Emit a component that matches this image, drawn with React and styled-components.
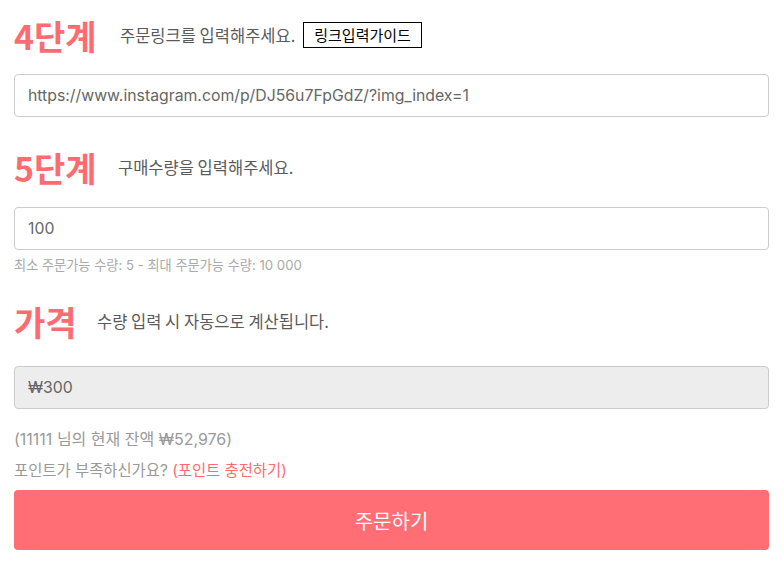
import React from 'react'
import styled, { createGlobalStyle } from 'styled-components'

const Global = createGlobalStyle`
  body {
    margin: 0;
    padding: 0;
    background: #fff;
    font-family: 'Inter', 'Noto Sans CJK KR', sans-serif;
  }
  * { box-sizing: border-box; }
`

const Page = styled.div`
  width: 755px;
  margin-left: 14px;
  padding-top: 13px;
  display: flex;
  flex-direction: column;
`

const StepHead = styled.div`
  display: flex;
  align-items: center;
  height: 44px;
  margin-top: ${p => p.top || 0}px;
`

const StepTitle = styled.h2`
  margin: 0;
  font-size: 34px;
  font-weight: 700;
  color: #ff6b70;
  font-family: 'Noto Sans CJK KR', sans-serif;
  width: ${p => p.w}px;
`

const StepDesc = styled.span`
  font-size: 16.5px;
  color: #5a5a5a;
  font-family: 'Noto Sans CJK KR', sans-serif;
`

const GuideButton = styled.button`
  margin-left: 8px;
  border: 1px solid #000;
  background: #fff;
  color: #000;
  font-size: 15px;
  font-family: 'Noto Sans CJK KR', sans-serif;
  padding: 0 10px;
  height: 26px;
  line-height: 22px;
`

const Field = styled.input`
  width: 100%;
  height: 43px;
  margin-top: ${p => p.top || 0}px;
  border: 1px solid #ccc;
  border-radius: 4px;
  padding: 0 13px;
  font-size: 15.8px;
  font-family: 'Inter', 'Noto Sans CJK KR', sans-serif;
  color: #666;
  background: ${p => (p.readOnly ? '#ededed' : '#fff')};
  outline: none;
`

const Hint = styled.div`
  font-size: 13.2px;
  color: #aaa;
  margin-top: 5px;
  font-family: 'Inter', 'Noto Sans CJK KR', sans-serif;
`

const Info = styled.div`
  font-size: ${p => p.size || 15}px;
  color: #999;
  margin-top: ${p => p.top || 0}px;
  font-family: 'Inter', 'Noto Sans CJK KR', sans-serif;
`

const ChargeLink = styled.a`
  color: #ff6b70;
  text-decoration: none;
`

const OrderButton = styled.button`
  width: 100%;
  height: 60px;
  margin-top: 10px;
  border: none;
  border-radius: 4px;
  background: #ff6e74;
  color: #fff;
  font-size: 20px;
  font-family: 'Noto Sans CJK KR', sans-serif;
`

export default function App() {
  return (
    <Page>
      <Global />
      <StepHead>
        <StepTitle w={106}>4단계</StepTitle>
        <StepDesc>주문링크를 입력해주세요.</StepDesc>
        <GuideButton>링크입력가이드</GuideButton>
      </StepHead>
      <Field top={17} defaultValue="https://www.instagram.com/p/DJ56u7FpGdZ/?img_index=1" />
      <StepHead top={28}>
        <StepTitle w={104}>5단계</StepTitle>
        <StepDesc>구매수량을 입력해주세요.</StepDesc>
      </StepHead>
      <Field top={18} defaultValue="100" />
      <Hint>최소 주문가능 수량: 5 - 최대 주문가능 수량: 10 000</Hint>
      <StepHead top={25}>
        <StepTitle w={83}>가격</StepTitle>
        <StepDesc>수량 입력 시 자동으로 계산됩니다.</StepDesc>
      </StepHead>
      <Field top={23} readOnly value="₩300" />
      <Info top={17} size={16}>(11111 님의 현재 잔액 ₩52,976)</Info>
      <Info top={8} size={15.4}>
        포인트가 부족하신가요? <ChargeLink href="#">(포인트 충전하기)</ChargeLink>
      </Info>
      <OrderButton>주문하기</OrderButton>
    </Page>
  )
}
